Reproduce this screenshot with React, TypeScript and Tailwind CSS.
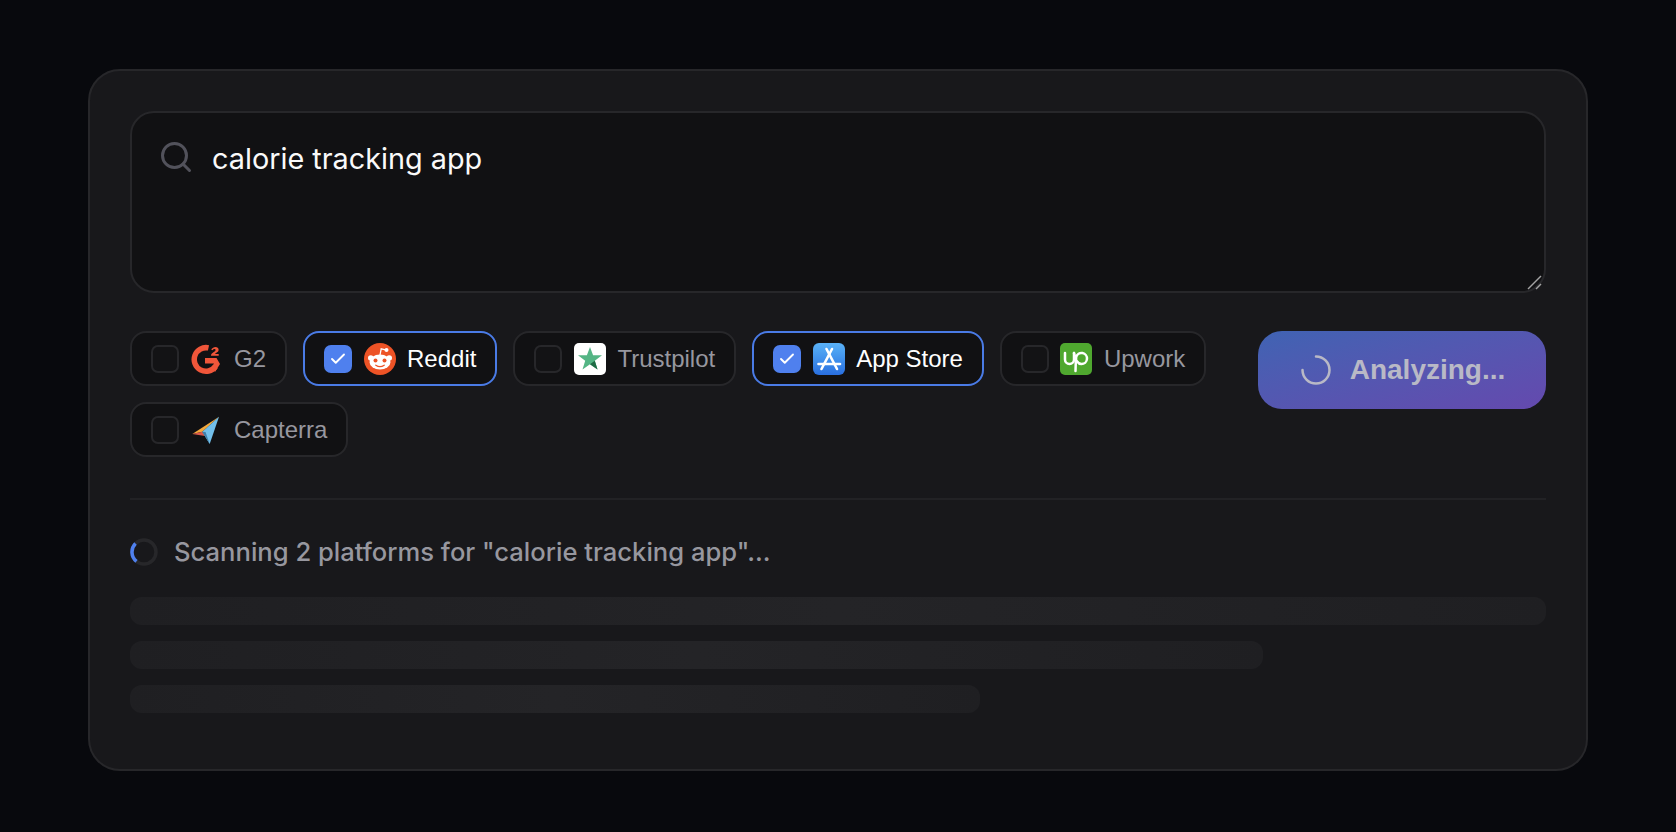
import { Check, Search } from 'lucide-react';
import type { ReactNode } from 'react';

function G2Logo() {
  return (
    <svg viewBox="0 0 32 32" className="h-8 w-8">
      <path
        d="M17.500 4.900A11.800 11.800 0 1 0 24.500 23.500"
        fill="none"
        stroke="#f0563a"
        strokeWidth="5.500"
      />
      <path d="M14 15h11.500l3.500 6-5 8-3-5.500 2-3h-9z" fill="#f0563a" />
      <path
        transform="translate(-1.500 3)"
        d="M21.500 9.800c0-1 .2-1.700.9-2.400 1-.9 2.200-1.500 3-2.200.5-.4.700-.8.700-1.200 0-.7-.5-1.100-1.200-1.100-.8 0-1.300.5-1.500 1.300l-1.800-.7C23 2 24.200 1 26 1c1.800 0 3.100 1 3.100 2.700 0 1.300-.7 2.100-1.900 2.900-.7.500-1.400.9-1.800 1.400h3.800v1.800z"
        fill="#f0563a"
      />
    </svg>
  );
}

function RedditLogo() {
  return (
    <svg viewBox="0 0 32 32" className="h-8 w-8">
      <circle cx="16" cy="16" r="16" fill="#ed5326" />
      <circle cx="6.800" cy="15" r="2.800" fill="white" />
      <circle cx="25.200" cy="15" r="2.800" fill="white" />
      <ellipse cx="16" cy="19" rx="10.500" ry="7.500" fill="white" />
      <path d="M16 12l1.200-6.200 4.300 1" fill="none" stroke="white" strokeWidth="1.300" />
      <circle cx="22.500" cy="7" r="2" fill="white" />
      <circle cx="11.500" cy="17.500" r="2" fill="#ed5326" />
      <circle cx="20.500" cy="17.500" r="2" fill="#ed5326" />
      <path d="M11.800 22.200c2.500 1.700 5.900 1.700 8.400 0" fill="none" stroke="#ed5326" strokeWidth="1.300" strokeLinecap="round" />
    </svg>
  );
}

function TrustpilotLogo() {
  return (
    <div className="h-8 w-8 rounded-[5px] bg-white">
      <svg viewBox="0 0 32 32" className="h-8 w-8">
        <path d="M16 4l3.100 8.300H28l-7.200 5.500 2.700 8.700-7.500-5.200-7.500 5.200 2.700-8.700L4 12.300h8.900z" fill="#54b585" />
        <path d="M16 21.300l4.800-3.500 2.700 8.700z" fill="#1f6b45" />
      </svg>
    </div>
  );
}

function AppStoreLogo() {
  return (
    <div className="h-8 w-8 rounded-[6px] bg-gradient-to-b from-[#5ab2f7] to-[#2a6fe0]">
      <svg viewBox="0 0 32 32" className="h-8 w-8" fill="none" stroke="white" strokeWidth="2.600" strokeLinecap="round">
        <path d="M13.500 6L24 26" />
        <path d="M19 6L8.500 26" />
        <path d="M5.500 21h21.500" />
      </svg>
    </div>
  );
}

function UpworkLogo() {
  return (
    <div className="h-8 w-8 rounded-[5px] bg-[#4fa82f]">
      <svg viewBox="0 0 32 32" className="h-8 w-8" fill="none" stroke="white" strokeWidth="2.500" strokeLinecap="round">
        <path d="M5 10v6.500a4.500 4.500 0 0 0 9 0V10" />
        <path d="M14 10c1 6 3 11 7.500 11a5.500 5.500 0 1 0-5.300-7c-.4 4-.6 9-.7 14" />
      </svg>
    </div>
  );
}

function CapterraLogo() {
  return (
    <svg viewBox="0 0 32 32" className="h-8 w-8">
      <path d="M1.300 20L28 2.700 11.300 17.700z" fill="#f3a83c" />
      <path d="M1.300 20l10-2.300L14 22z" fill="#d9584b" />
      <path d="M28 2.700L18.700 30 11.300 17.700z" fill="#72bfea" />
      <path d="M11.300 17.700L18.700 30 14.500 18z" fill="#3f7fa8" />
    </svg>
  );
}

function Chip({ label, logo, selected }: { label: string; logo: ReactNode; selected?: boolean }) {
  return (
    <div
      className={
        selected
          ? 'flex h-[55px] items-center gap-[11.5px] rounded-[16px] border-2 border-[#4a7be6] bg-[#111113] pl-[19px] pr-[19px]'
          : 'flex h-[55px] items-center gap-[11.5px] rounded-[16px] border-2 border-[#27272a] bg-[#111113] pl-[19px] pr-[19px]'
      }
    >
      {selected ? (
        <div className="flex h-7 w-7 items-center justify-center rounded-[7px] bg-[#4f80ee]">
          <Check className="h-[18px] w-[18px] text-white" strokeWidth={2.5} />
        </div>
      ) : (
        <div className="h-7 w-7 rounded-[7px] border-2 border-[#27272a] bg-[#131315]" />
      )}
      {logo}
      <span
        className={
          selected
            ? "font-['Liberation_Sans',sans-serif] text-[24px] text-white"
            : "font-['Liberation_Sans',sans-serif] text-[24px] text-[#97979f]"
        }
      >
        {label}
      </span>
    </div>
  );
}

export default function App() {
  return (
    <div className="min-h-[832px] bg-[#08090d] px-[88px] pt-[69px] pb-[62px] font-['Inter',sans-serif]">
      <div className="rounded-[32px] border-2 border-[#27272a] bg-[#18181b] px-10 pt-10 pb-[56px]">
        <div className="relative h-[182px] rounded-[24px] border-2 border-[#27272a] bg-[#111113] pl-20 pt-[26px] text-[28.8px] leading-[40px] text-[#fafafa]">
          <Search className="absolute left-[26px] top-[26px] h-9 w-9 text-[#52525b]" strokeWidth={2} />
          calorie tracking app
          <svg viewBox="0 0 16 16" className="absolute bottom-[1px] right-[1px] h-4 w-4" stroke="#a3a3a3" strokeWidth="1.500">
            <path d="M1 15L14 2" />
            <path d="M9 15l5-5" />
          </svg>
        </div>

        <div className="mt-[38px] flex items-start gap-8">
          <div className="flex flex-1 flex-wrap gap-4">
            <Chip label="G2" logo={<G2Logo />} />
            <Chip label="Reddit" logo={<RedditLogo />} selected />
            <Chip label="Trustpilot" logo={<TrustpilotLogo />} />
            <Chip label="App Store" logo={<AppStoreLogo />} selected />
            <Chip label="Upwork" logo={<UpworkLogo />} />
            <Chip label="Capterra" logo={<CapterraLogo />} />
          </div>
          <div className="flex h-[78px] w-[288px] items-center justify-center gap-[18px] rounded-[24px] bg-gradient-to-br from-[#3f63b3] to-[#6449ae] pl-px font-['Liberation_Sans',sans-serif] text-[28px] font-bold text-[#b9b9c6]">
            <svg viewBox="0 0 32 32" className="h-8 w-8" fill="none" stroke="#b9b9c6" strokeWidth="2.500" strokeLinecap="round">
              <path d="M16 2.500A13.500 13.500 0 1 1 2.500 16" />
            </svg>
            Analyzing...
          </div>
        </div>

        <div className="mt-[41px] h-0.5 bg-[#222225]" />

        <div className="mt-[33px] flex items-center gap-4">
          <svg viewBox="0 0 28 28" className="h-7 w-7" fill="none" strokeWidth="3.500">
            <circle cx="14" cy="14" r="12" stroke="#27272a" />
            <path d="M6.500 23.400A12 12 0 0 1 5.500 5.500" stroke="#4f80ee" />
          </svg>
          <span className="text-[25.6px] font-medium text-[#97979f]">Scanning 2 platforms for "calorie tracking app"...</span>
        </div>

        <div className="mt-[26px] flex flex-col gap-4">
          <div className="h-7 w-full rounded-[12px] bg-gradient-to-r from-[#1f1f22] via-[#242427] to-[#1f1f22]" />
          <div className="h-7 w-4/5 rounded-[12px] bg-gradient-to-r from-[#1f1f22] via-[#242427] to-[#1f1f22]" />
          <div className="h-7 w-3/5 rounded-[12px] bg-gradient-to-r from-[#1f1f22] via-[#242427] to-[#1f1f22]" />
        </div>
      </div>
    </div>
  );
}
